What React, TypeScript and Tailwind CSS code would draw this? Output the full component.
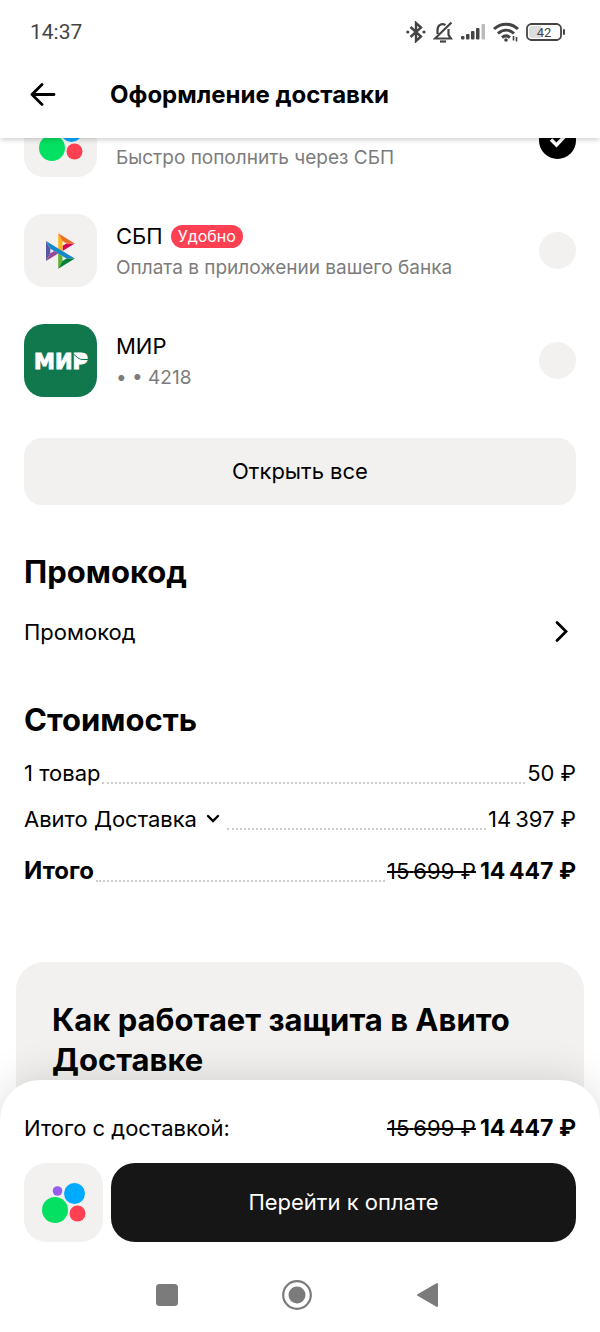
import { useState } from "react";
import type { ReactNode } from "react";

type Method = {
  id: string;
  title?: string;
  badge?: string;
  subtitle: string;
  tile: string;
  icon: ReactNode;
};

function WalletIcon() {
  return (
    <svg viewBox="0 0 44 40" className="h-10 w-11" aria-hidden="true">
      <circle cx="15.5" cy="8" r="4.8" fill="#965EEB" />
      <circle cx="32.5" cy="10.5" r="10.5" fill="#00AAFF" />
      <circle cx="13" cy="27" r="13" fill="#04E061" />
      <circle cx="35.5" cy="30.5" r="8" fill="#FF4053" />
    </svg>
  );
}

function SbpIcon() {
  return (
    <svg viewBox="0 0 98 120" className="h-9 w-[29px]" aria-hidden="true">
      <path fill="#5B57A2" d="M0 26.12l14.532 25.975v15.844L.017 93.863z" />
      <path fill="#D90751" d="M55.797 42.643l13.617-8.346 27.868-.026-41.485 25.414z" />
      <path fill="#FAB718" d="M55.72 25.967l.077 34.39-14.566-8.95V0z" />
      <path fill="#ED6F26" d="M97.282 34.271l-27.869.026-13.693-8.33L41.231 0z" />
      <path fill="#63B22F" d="M55.797 94.007V77.322l-14.566-8.78.008 51.458z" />
      <path fill="#1487C9" d="M69.38 85.737L14.531 52.095 0 26.12l97.223 59.583z" />
      <path fill="#017F36" d="M41.24 120l14.556-25.993 13.583-8.27 27.843-.034z" />
      <path fill="#984995" d="M.017 93.863l41.333-25.32-13.896-8.526-12.922 7.922z" />
    </svg>
  );
}

function MirIcon() {
  return (
    <svg viewBox="0 0 68 32" className="h-8 w-[68px]" aria-hidden="true">
      <text
        x="34"
        y="23.5"
        textAnchor="middle"
        fill="#fff"
        stroke="#fff"
        strokeWidth="1"
        fontFamily="DejaVu Sans, sans-serif"
        fontWeight="700"
        fontSize="21"
      >
        МИР
      </text>
      <rect x="50" y="9" width="10" height="8" rx="3" fill="#fff" />
      <path d="M47 9.500l4 3.500q2 1.500 5 1.500h8" fill="none" stroke="#11774D" strokeWidth="1" />
    </svg>
  );
}

const methods: Method[] = [
  { id: "wallet", subtitle: "Быстро пополнить через СБП", tile: "bg-[#f2f1f0]", icon: <WalletIcon /> },
  {
    id: "sbp",
    title: "СБП",
    badge: "Удобно",
    subtitle: "Оплата в приложении вашего банка",
    tile: "bg-[#f2f1f0]",
    icon: <SbpIcon />,
  },
  { id: "mir", title: "МИР", subtitle: "• • 4218", tile: "bg-[#11774d]", icon: <MirIcon /> },
];

function StatusBar() {
  return (
    <div className="flex h-16 items-center justify-between pr-[34px] pl-[30px] text-[#444]">
      <span className="font-[Roboto,sans-serif] text-[21px] leading-6">14:37</span>
      <div className="flex items-center gap-[7px]">
        <svg viewBox="0 0 20 22" className="h-[22px] w-5" fill="none" stroke="currentColor" strokeWidth="2.4" aria-hidden="true">
          <path d="M4.500 6l10.500 9.500L10 20V2l5 4.500-10.500 9.500" />
          <circle cx="1.800" cy="11" r="1.600" fill="currentColor" stroke="none" />
          <circle cx="18" cy="11" r="1.600" fill="currentColor" stroke="none" />
        </svg>
        <svg viewBox="0 0 20 22" className="h-[22px] w-5" fill="none" stroke="currentColor" strokeWidth="2.200" aria-hidden="true">
          <path d="M15.500 8v6l2.500 3.500H2L18.500 1.500M4.500 13V9.500c0-5.500 4-7.500 8-5.500" />
          <path d="M7 20.500h6" />
        </svg>
        <svg viewBox="0 0 26 18" className="h-[18px] w-[26px]" fill="currentColor" aria-hidden="true">
          <rect x="1" y="13" width="3.500" height="3.500" rx="1" />
          <rect x="6" y="11" width="3.500" height="5.500" rx="1" />
          <rect x="11" y="8" width="3.500" height="8.500" rx="1" />
          <rect x="16" y="5" width="3.500" height="11.500" rx="1" />
          <rect x="21.500" y="1" width="3.500" height="15.500" rx="1" fill="#bbb" />
        </svg>
        <svg viewBox="0 0 26 20" className="h-5 w-[26px]" fill="none" stroke="currentColor" strokeWidth="3" aria-hidden="true">
          <path d="M1 7c7-6.500 17-6.500 24 0M5 11.500c5-4.500 11-4.500 16 0M9 15.500c2.500-2 5.500-2 8 0" />
          <circle cx="13" cy="18" r="1.800" fill="currentColor" stroke="none" />
          <path d="M20.500 14v4.500M23.500 15v4.500" strokeWidth="1.600" />
        </svg>
        <svg viewBox="0 0 40 18" className="h-[18px] w-10" aria-hidden="true">
          <rect x="1" y="1" width="34" height="16" rx="4.500" fill="none" stroke="currentColor" strokeWidth="1.800" />
          <path d="M6 3h9v12H6a3 3 0 0 1-3-3V6a3 3 0 0 1 3-3z" fill="#ddd" />
          <rect x="37" y="6" width="2" height="6" rx="1" fill="currentColor" />
          <text x="18" y="13.500" textAnchor="middle" fontSize="13" fontFamily="Roboto, sans-serif" fill="currentColor">
            42
          </text>
        </svg>
      </div>
    </div>
  );
}

function MethodRow({ method, checked, onSelect }: { method: Method; checked: boolean; onSelect: () => void }) {
  return (
    <label className="flex items-center">
      <span className={`grid size-[73px] shrink-0 place-items-center rounded-[20px] ${method.tile}`}>{method.icon}</span>
      <span className="ml-[19px] flex min-w-0 flex-1 flex-col pt-[3px]">
        <span className="flex h-8 items-center gap-2 text-[22px] leading-8">
          {method.title}
          {method.badge && (
            <span className="rounded-full bg-[#ff4053] px-[7px] text-base leading-[23px] text-white">{method.badge}</span>
          )}
        </span>
        <span className="text-[19px] leading-8 text-[#7c7c7c]">{method.subtitle}</span>
      </span>
      <span className="grid size-[37px] shrink-0 place-items-center">
        <input
          type="radio"
          name="payment"
          checked={checked}
          onChange={onSelect}
          className="col-start-1 row-start-1 size-[37px] appearance-none rounded-full bg-[#f2f1f0] checked:bg-black"
        />
        {checked && (
          <svg
            viewBox="0 0 20 16"
            className="pointer-events-none col-start-1 row-start-1 h-4 w-5"
            fill="none"
            stroke="#fff"
            strokeWidth="3.500"
            aria-hidden="true"
          >
            <path d="M3 6.500l5.500 5.500L17 3" />
          </svg>
        )}
      </span>
    </label>
  );
}

function TotalPrice() {
  return (
    <span className="flex items-baseline gap-1 whitespace-nowrap">
      <s className="decoration-2">15{"\u2009"}699 ₽</s>
      <strong className="text-[23px] leading-8 font-bold">14{"\u2009"}447 ₽</strong>
    </span>
  );
}

function CostRow({ label, children }: { label: ReactNode; children: ReactNode }) {
  return (
    <div className="flex text-[22px] leading-8">
      <dt className="flex items-center">{label}</dt>
      <span className="mx-0.5 mb-[5px] flex-1 border-b-2 border-dotted border-[#ccc]" />
      <dd className="whitespace-nowrap">{children}</dd>
    </div>
  );
}

export default function App() {
  const [selected, setSelected] = useState("wallet");

  return (
    <div className="flex h-screen flex-col overflow-hidden bg-white font-[Inter,sans-serif] text-black">
      <header className="relative z-10 shrink-0 bg-white shadow-[0_2px_5px_rgba(0,0,0,0.18)]">
        <StatusBar />
        <div className="flex h-[74px] items-start pl-[29px]">
          <button type="button" aria-label="Назад" className="flex h-[62px] w-[81px] items-center">
            <svg viewBox="0 0 28 24" className="h-6 w-7" fill="none" stroke="currentColor" strokeWidth="2.800" strokeLinecap="round" strokeLinejoin="round" aria-hidden="true">
              <path d="M25 11.500H3M13 1.500l-10 10 10 10" />
            </svg>
          </button>
          <h1 className="text-2xl leading-[62px] font-bold">Оформление доставки</h1>
        </div>
      </header>

      <main className="min-h-0 flex-1 overflow-hidden">
        <div className="-mt-[34px] px-6">
          <div className="flex flex-col gap-[37px]">
            {methods.map((m) => (
              <MethodRow key={m.id} method={m} checked={m.id === selected} onSelect={() => setSelected(m.id)} />
            ))}
          </div>
          <button type="button" className="mt-[41px] h-[67px] w-full rounded-[18px] bg-[#f2f1f0] text-[22px]">
            Открыть все
          </button>

          <h2 className="mt-[47px] text-[31px] leading-10 font-bold">Промокод</h2>
          <button type="button" className="mt-4 flex h-12 w-full items-center justify-between pr-2 text-[22px]">
            Промокод
            <svg viewBox="0 0 14 24" className="h-6 w-3.5" fill="none" stroke="currentColor" strokeWidth="2.800" strokeLinecap="round" aria-hidden="true">
              <path d="M3 2.500L12 11.500l-9 9" />
            </svg>
          </button>

          <h2 className="mt-11 text-[31px] leading-10 font-bold">Стоимость</h2>
          <dl className="mt-[17px]">
            <CostRow label="1 товар">50 ₽</CostRow>
            <div className="mt-3.5">
              <CostRow
                label={
                  <button type="button" className="flex items-center gap-2 pr-1">
                    Авито Доставка
                    <svg viewBox="0 0 16 12" className="h-3 w-4" fill="none" stroke="currentColor" strokeWidth="2.400" strokeLinecap="round" aria-hidden="true">
                      <path d="M3 3l5 5 5-5" />
                    </svg>
                  </button>
                }
              >
                14{"\u2009"}397 ₽
              </CostRow>
            </div>
            <div className="mt-5">
              <CostRow label={<strong className="text-2xl leading-8 font-bold">Итого</strong>}>
                <TotalPrice />
              </CostRow>
            </div>
          </dl>
        </div>

        <section className="mx-4 mt-[75px] rounded-[28px] bg-[#f2f1f0] px-9 pt-[38px] pb-20">
          <h2 className="text-[31px] leading-10 font-bold">Как работает защита в Авито Доставке</h2>
        </section>
      </main>

      <footer className="relative z-10 -mt-10 shrink-0 rounded-t-[40px] bg-white px-6 pt-8 shadow-[0_0_44px_rgba(0,0,0,0.14)]">
        <div className="flex justify-between text-[22px] leading-8">
          <span>Итого с доставкой:</span>
          <TotalPrice />
        </div>
        <div className="mt-[19px] flex gap-2">
          <button type="button" aria-label="Кошелёк" className="grid size-[79px] shrink-0 place-items-center rounded-[22px] bg-[#f2f1f0]">
            <WalletIcon />
          </button>
          <button type="button" className="h-[79px] flex-1 rounded-[24px] bg-[#161616] text-[22px] text-white">
            Перейти к оплате
          </button>
        </div>
        <nav className="flex h-[90px] items-center justify-center gap-[100px] pt-4 pr-1.5 text-[#7b7b7b]">
          <button type="button" aria-label="Недавние">
            <svg viewBox="0 0 30 30" className="size-[30px]" fill="currentColor" aria-hidden="true">
              <rect x="4" y="4" width="22" height="22" rx="3.500" />
            </svg>
          </button>
          <button type="button" aria-label="Домой">
            <svg viewBox="0 0 30 30" className="size-[30px]" aria-hidden="true">
              <circle cx="15" cy="15" r="13.800" fill="none" stroke="currentColor" strokeWidth="2.200" />
              <circle cx="15" cy="15" r="8.500" fill="currentColor" />
            </svg>
          </button>
          <button type="button" aria-label="Назад в системе">
            <svg viewBox="0 0 30 30" className="size-[30px]" fill="currentColor" stroke="currentColor" strokeWidth="2" strokeLinejoin="round" aria-hidden="true">
              <path d="M25 4v22L6 15z" />
            </svg>
          </button>
        </nav>
      </footer>
    </div>
  );
}
